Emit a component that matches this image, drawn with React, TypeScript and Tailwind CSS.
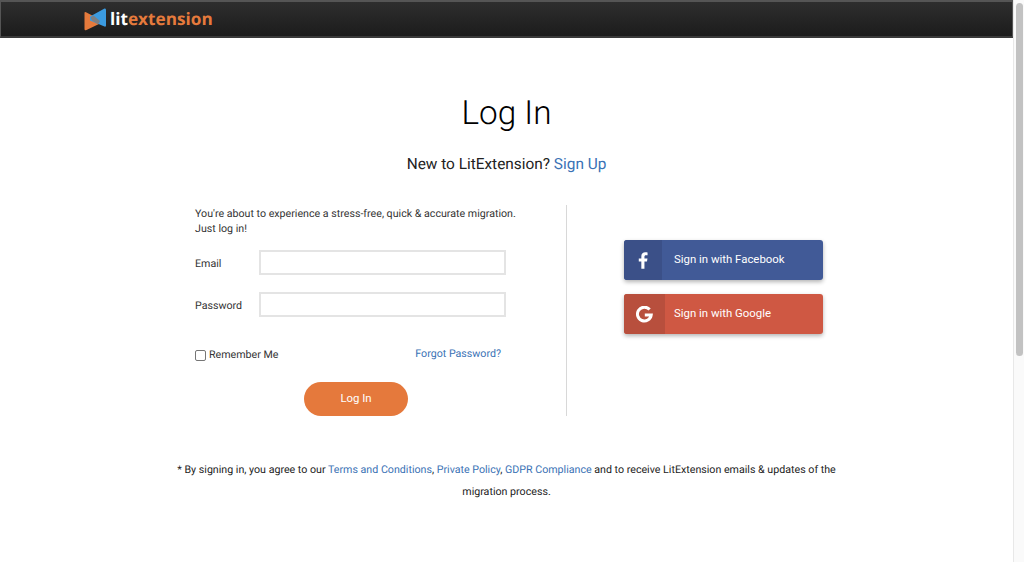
const links = {
  terms: 'Terms and Conditions',
  privacy: 'Private Policy',
  gdpr: 'GDPR Compliance',
};

function Logo() {
  return (
    <div className="flex items-center">
      <svg width="23" height="23" viewBox="0 0 23 23">
        <path d="M0.5 5 Q0.5 3.5 2 4.3 L16 11.5 L16 15.5 L2.5 22 Q0.5 23 0.5 21 Z" fill="#e57a3c" />
        <path d="M20.5 0.5 Q22 0 22 2 L22 17.5 Q22 19 20.5 18.5 L6 12.5 L6 8.5 Z" fill="#3b9be0" />
        <path d="M6.5 9.5 L9.5 7.5 L16 13 L14 16.5 L8 12.5 Z" fill="#7d7f82" />
      </svg>
      <span className="mt-[2px] ml-[3px] font-['Open_Sans',sans-serif] text-[17.2px] leading-none font-bold text-white">
        lit<span className="text-[#e57a3c]">extension</span>
      </span>
    </div>
  );
}

function Field({label}: {label: string}) {
  return (
    <div className="flex items-center">
      <label className="mt-[2px] w-[64px] text-[10.67px] text-[#333]">{label}</label>
      <input className="h-[25px] w-[247px] border-2 border-[#e4e4e4] bg-white outline-none" />
    </div>
  );
}

function SocialButton({label, bg, dark, iconW, icon}: {label: string; bg: string; dark: string; iconW: string; icon: React.ReactNode}) {
  return (
    <button className={`flex h-[40px] w-[199px] overflow-hidden rounded-[3px] text-left shadow-[0_2px_4px_rgba(0,0,0,0.3)] ${bg}`}>
      <span className={`flex h-full items-center justify-center ${iconW} ${dark}`}>{icon}</span>
      <span className="flex-1" />
      <span className="flex h-full w-[149px] items-center text-[11.4px] text-white">{label}</span>
    </button>
  );
}

export default function App() {
  return (
    <div className="flex h-[562px] w-[1024px] overflow-hidden bg-white font-['Roboto',sans-serif] [text-rendering:geometricPrecision]">
      <div className="w-[1013px]">
        <header className="flex h-[38px] items-center border-x border-y-2 border-[#555] border-b-[#3a3a3a] bg-gradient-to-b from-[#2e2e2e] to-[#1c1c1c] pl-[83px]">
          <Logo />
        </header>

        <h1 className="mt-[54px] text-center text-[33.3px] leading-[44px] font-light text-black">Log In</h1>
        <p className="mt-[16px] text-center text-[15.4px] leading-[24px] text-[#222]">
          New to LitExtension? <a className="text-[#3a72b5]">Sign Up</a>
        </p>

        <div className="mt-[29px] flex pl-[195px]">
          <div className="h-[211px] w-[372px] border-r border-[#d8d8d8]">
            <p className="pt-[1px] text-[10.67px] leading-[15px] text-[#333]">
              You're about to experience a stress-free, quick &amp; accurate migration.
              <br />
              Just log in!
            </p>
            <div className="mt-[14px] flex flex-col gap-[17px]">
              <Field label="Email" />
              <Field label="Password" />
            </div>
            <div className="mt-[30px] flex w-[306px] items-center justify-between">
              <label className="flex items-center gap-[3px] text-[10.67px] text-[#333]">
                <span className="h-[11px] w-[11px] rounded-[2px] border border-[#767676] bg-white" />
                Remember Me
              </label>
              <a className="-mt-[2px] text-[10.67px] text-[#3a72b5]">Forgot Password?</a>
            </div>
            <button className="mt-[19px] ml-[109px] h-[34px] w-[104px] rounded-full bg-[#e5793c] text-[11.4px] text-white">
              Log In
            </button>
          </div>

          <div className="flex flex-col gap-[14px] pt-[35px] pl-[57px]">
            <SocialButton
              label="Sign in with Facebook"
              bg="bg-[#415a97]"
              dark="bg-[#3b5088]"
              iconW="w-[38px]"
              icon={
                <svg width="10" height="17" viewBox="0 0 9 15">
                  <path d="M5.8 15 V8.4 H8.1 L8.5 5.7 H5.8 V4.2 C5.8 3.4 6.1 2.8 7.2 2.8 H8.6 V0.3 C8.2 0.2 7.4 0.1 6.5 0.1 C4.5 0.1 3 1.4 3 3.8 V5.7 H0.7 V8.4 H3 V15 Z" fill="#fff" />
                </svg>
              }
            />
            <SocialButton
              label="Sign in with Google"
              bg="bg-[#cf5843]"
              dark="bg-[#b84f3d]"
              iconW="w-[41px]"
              icon={
                <svg width="17" height="17" viewBox="0 0 17 17">
                  <path d="M13.6 3.6 A6.9 6.9 0 1 0 15.2 9 H8.8" fill="none" stroke="#fff" strokeWidth="3" />
                </svg>
              }
            />
          </div>
        </div>

        <p className="mx-auto mt-[43px] w-[680px] text-center text-[10.67px] leading-[22px] text-[#222]">
          * By signing in, you agree to our <a className="text-[#3a72b5]">{links.terms}</a>,{' '}
          <a className="text-[#3a72b5]">{links.privacy}</a>, <a className="text-[#3a72b5]">{links.gdpr}</a> and to
          receive LitExtension emails &amp; updates of the migration process.
        </p>
      </div>

      {/* scrollbar */}
      <div className="w-[11px] border-l border-[#e8e8e8] bg-[#fafafa] pt-[3px] pl-[2px]">
        <div className="h-[353px] w-[7px] rounded-full bg-[#c2c2c2]" />
      </div>
    </div>
  );
}
